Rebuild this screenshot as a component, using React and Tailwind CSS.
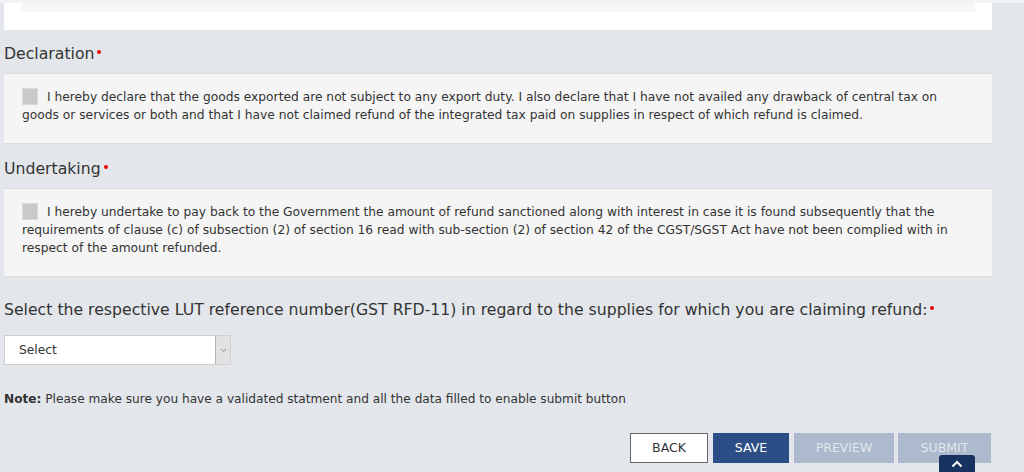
import React from 'react';

const Star = () => (
  <span className="inline-block w-[4px] h-[4px] rounded-full bg-[#ee0000] ml-[3px] align-middle relative -top-[3px]" />
);

const CheckRow = ({ children }) => (
  <div className="bg-[#f5f5f5] border-t border-b border-[#dcdcdc] pl-[18px] pr-[16px] pt-[14px] pb-[19px] text-[12.25px] leading-[18px] text-[#333]">
    <span className="inline-block w-[16px] h-[17px] bg-[#c9c9c9] border border-[#dadada] mr-[9px] align-top" />
    {children}
  </div>
);

const App = () => {
  return (
    <div className="relative h-[472px] overflow-hidden bg-[#e3e7eb] font-['DejaVu_Sans',sans-serif] text-[#333]">
      {/* top strip and leftover of the previous panel */}
      <div className="h-[3px] bg-[#f2f3f4]" />
      <div className="w-[988px] ml-[4px] h-[27px] bg-white pl-[17px] pr-[17px]">
        <div className="h-[9px] bg-[#f6f6f6]" />
      </div>

      <div className="w-[988px] ml-[4px] flex flex-col">
        <h3 className="mt-[13px] mb-[8px] text-[15.7px] leading-[22px]">
          Declaration<Star />
        </h3>
        <CheckRow>
          I hereby declare that the goods exported are not subject to any export duty. I also declare that I have not availed any drawback of central tax on goods or services or both and that I have not claimed refund of the integrated tax paid on supplies in respect of which refund is claimed.
        </CheckRow>

        <h3 className="mt-[14px] mb-[8px] text-[15.7px] leading-[22px]">
          Undertaking<Star />
        </h3>
        <CheckRow>
          I hereby undertake to pay back to the Government the amount of refund sanctioned along with interest in case it is found subsequently that the requirements of clause (c) of subsection (2) of section 16 read with sub-section (2) of section 42 of the CGST/SGST Act have not been complied with in respect of the amount refunded.
        </CheckRow>

        <p className="mt-[22px] text-[15.7px] leading-[22px]">
          Select the respective LUT reference number(GST RFD-11) in regard to the supplies for which you are claiming refund:<Star />
        </p>

        <div className="mt-[14px] w-[227px] h-[30px] flex bg-white border border-[#d0d0d0]">
          <span className="flex-1 pl-[14px] text-[12.25px] leading-[28px] text-[#333]">Select</span>
          <span className="w-[15px] bg-[#e2e2e2] border-l border-[#b5b5b5] flex items-center justify-center">
            <svg width="7" height="5" viewBox="0 0 7 5">
              <path d="M1 1l2.5 2.5L6 1" fill="none" stroke="#888" strokeWidth="1" />
            </svg>
          </span>
        </div>

        <p className="mt-[25px] text-[12.15px] leading-[18px] text-[#333]">
          <b className="font-bold">Note:</b> Please make sure you have a validated statment and all the data filled to enable submit button
        </p>

        <div className="mt-[25px] flex justify-end gap-[5px] pr-[1px]">
          <button className="w-[78px] h-[30px] bg-white border border-[#666] text-[12.5px] text-[#333]">BACK</button>
          <button className="w-[76px] h-[30px] bg-[#2c4e86] text-[12.5px] text-white">SAVE</button>
          <button className="w-[100px] h-[30px] bg-[#adb9cc] text-[12.5px] text-[#e2e7ef]">PREVIEW</button>
          <button className="w-[93px] h-[30px] bg-[#adb9cc] text-[12.5px] text-[#e2e7ef] ml-[-1px]">SUBMIT</button>
        </div>
      </div>

      {/* back-to-top tab */}
      <div className="absolute left-[939px] top-[455px] w-[36px] h-[24px] rounded-t-[3px] bg-[#17325e] flex justify-center pt-[5px]">
        <svg width="12" height="8" viewBox="0 0 12 8">
          <path d="M1.5 6.5L6 2l4.5 4.5" fill="none" stroke="white" strokeWidth="2" />
        </svg>
      </div>
    </div>
  );
};

export default App;
